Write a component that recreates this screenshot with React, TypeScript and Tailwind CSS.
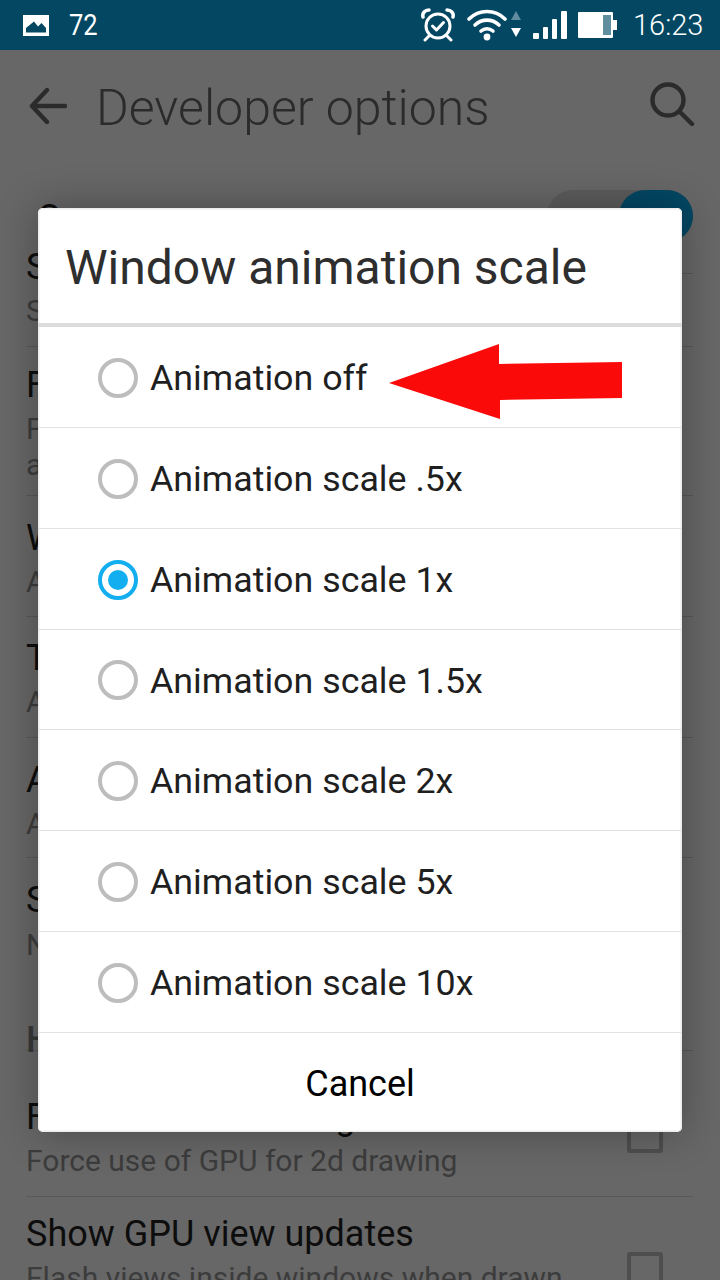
const sans = 'font-["Roboto",sans-serif]';

const scales = [
  'Animation off',
  'Animation scale .5x',
  'Animation scale 1x',
  'Animation scale 1.5x',
  'Animation scale 2x',
  'Animation scale 5x',
  'Animation scale 10x',
];

function StatusBar() {
  return (
    <div className="flex h-[50px] items-center bg-[#034763] text-white">
      <svg width="26" height="21" viewBox="0 0 26 21" className="ml-[23px]">
        <path fillRule="evenodd" fill="#fff" d="M0 0h26v21H0z M3 17.5h20V13l-4.5-5-3.5 3.5L11 6.5 3 13z" />
      </svg>
      <span className="ml-[20px] w-[31px] origin-left scale-x-[0.85] text-[30px] leading-none font-normal">72</span>
      <svg width="36" height="34" viewBox="0 0 36 34" className="ml-[321px]" fill="none" stroke="#fff" strokeWidth="3" strokeLinecap="round" strokeLinejoin="round">
        <circle cx="17" cy="18" r="12" />
        <path d="M11.5 18l4 4 7-7.5" />
        <path d="M2 9c-1-4 2-7 6-7M32 9c1-4-2-7-6-7" strokeWidth="3.5" />
        <path d="M8 28l-4 4M26 28l4 4" />
      </svg>
      <svg width="40" height="34" viewBox="0 0 40 34" className="ml-[10px]" fill="none" stroke="#fff" strokeWidth="3.6" strokeLinecap="round">
        <path d="M2 11c10-10 26-10 36 0" />
        <path d="M8 17c7-6.500 17-6.500 24 0" />
        <path d="M14 23c3.500-3 8.500-3 12 0" />
        <circle cx="20" cy="29" r="3.400" fill="#fff" stroke="none" />
      </svg>
      <svg width="12" height="28" viewBox="0 0 12 28" className="ml-[3px]">
        <path d="M6 0l5 9H1z" fill="#5f8c9f" />
        <path d="M1 17h10l-5 9z" fill="#fff" />
      </svg>
      <svg width="34" height="30" viewBox="0 0 34 30" className="ml-[11px]" fill="#fff">
        <rect x="0" y="23" width="6" height="6" rx="1" />
        <rect x="10" y="17" width="5" height="12" rx="1" />
        <rect x="19" y="9" width="5" height="20" rx="1" />
        <rect x="28" y="1" width="6" height="28" rx="1" />
      </svg>
      <svg width="40" height="26" viewBox="0 0 40 26" className="ml-[11px]">
        <rect x="0" y="0" width="35" height="26" rx="1" fill="#fff" />
        <rect x="25" y="3" width="8" height="20" fill="#5f8f9f" />
        <rect x="35" y="8" width="4" height="10" fill="#fff" />
      </svg>
      <span className="ml-[15px] text-[29px] leading-none font-light">16:23</span>
    </div>
  );
}

function Toolbar() {
  return (
    <div className="flex h-[112px] items-center text-[#2b2b2b]">
      <svg width="38" height="38" viewBox="0 0 38 38" className="ml-[29px]" fill="none" stroke="currentColor" strokeWidth="4.400" strokeLinecap="round" strokeLinejoin="round">
        <path d="M3 19h33M18 3L3 19l15 16" />
      </svg>
      <span className="mt-[4px] ml-[29px] text-[50px] leading-none font-light">Developer options</span>
      <svg width="48" height="48" viewBox="0 0 48 48" className="mr-[25px] mb-[4px] ml-auto" fill="none" stroke="currentColor" strokeWidth="4.400" strokeLinecap="round">
        <circle cx="21" cy="20" r="15.500" />
        <path d="M33 32l12 12" />
      </svg>
    </div>
  );
}

function Row({ title, lines, height, top, check }: { title: string; lines: string[]; height: string; top: string; check?: string }) {
  return (
    <div className={`relative border-b border-[#585858] ${height} ${top}`}>
      <div className="mb-[6px] text-[36px] leading-[40px] whitespace-nowrap text-[#0d0d0d]">{title}</div>
      {lines.map((line) => (
        <div key={line} className="text-[30px] leading-[36px] whitespace-nowrap text-[#3c3c3c]">
          {line}
        </div>
      ))}
      {check && <div className={`absolute right-[30px] h-[36px] w-[36px] rounded-[3px] border-4 border-[#4e4e4e] ${check}`} />}
    </div>
  );
}

function BackgroundList() {
  return (
    <div className="pr-[27px] pl-[26px]">
      <div className="relative h-[112px]">
        <span className="ml-[11px] block pt-[36px] text-[36px] leading-[40px] text-[#0d0d0d]">On</span>
        <div className="absolute top-[28px] right-0 flex h-[52px] w-[146px] justify-end rounded-full bg-[#5c5c5c]">
          <div className="h-[52px] w-[74px] rounded-full bg-[#034763]" />
        </div>
        <div className="absolute right-0 bottom-0 h-px w-[20px] bg-[#585858]" />
      </div>
      <div className="-mt-[27px]">
        <Row title="Show layout bounds" lines={['Show clip bounds, margins, etc.']} height="h-[100px]" top="pt-0" />
      </div>
      <Row title="Force RTL layout direction" lines={['Force screen layout direction to RTL for', 'all locales']} height="h-[149px]" top="pt-[18px]" />
      <Row title="Window animation scale" lines={['Animation scale 1x']} height="h-[121px]" top="pt-[22px]" />
      <Row title="Transition animation scale" lines={['Animation scale 1x']} height="h-[121px]" top="pt-[21px]" />
      <Row title="Animator duration scale" lines={['Animation scale 1x']} height="h-[120px]" top="pt-[22px]" />
      <div className="h-[193px] border-b border-[#585858] pt-[22px]">
        <div className="mb-[7px] text-[36px] leading-[40px] whitespace-nowrap text-[#0d0d0d]">Simulate secondary displays</div>
        <div className="text-[30px] leading-[36px] text-[#3c3c3c]">None</div>
        <div className="mt-[57px] text-[36px] leading-[40px] font-medium whitespace-nowrap text-[#383838]">Hardware accelerated rendering</div>
      </div>
      <Row title="Force GPU rendering" lines={['Force use of GPU for 2d drawing']} height="h-[146px]" top="pt-[46px]" check="top-[66px]" />
      <Row title="Show GPU view updates" lines={['Flash views inside windows when drawn']} height="h-[146px]" top="pt-[17px]" check="top-[55px]" />
    </div>
  );
}

function Radio({ checked }: { checked: boolean }) {
  return (
    <span className={`flex h-[40px] w-[40px] items-center justify-center rounded-full border-4 ${checked ? 'border-[#13aeef]' : 'border-[#bdbdbd]'}`}>
      {checked && <span className="h-[20px] w-[20px] rounded-full bg-[#13aeef]" />}
    </span>
  );
}

function ScaleDialog() {
  return (
    <div className="absolute top-[208px] left-[38px] w-[644px] overflow-hidden rounded-[5px] bg-white shadow-[0_0_40px_rgba(0,0,0,0.3),inset_0_0_0_1.5px_#ececec]">
      <div className="flex h-[119px] items-center border-b-4 border-[#dcdcdc] pt-[4px] pl-[27px] text-[48px] leading-none text-[#2e2e2e]">Window animation scale</div>
      {scales.map((label) => (
        <div key={label} className="flex h-[100.85px] items-center border-b-[1.5px] border-[#e2e2e2] pt-[2px] pl-[60px] text-[#1f1f1f]">
          <Radio checked={label === 'Animation scale 1x'} />
          <span className="mt-[2px] ml-[12px] text-[35.8px] leading-none">{label}</span>
        </div>
      ))}
      <div className="flex h-[99px] items-center justify-center pt-[4px] text-[36px] leading-none text-black">Cancel</div>
    </div>
  );
}

export default function App() {
  return (
    <div className={`relative h-[1280px] w-[720px] overflow-hidden bg-[#676767] ${sans}`}>
      <StatusBar />
      <Toolbar />
      <BackgroundList />
      <ScaleDialog />
      <svg width="240" height="80" viewBox="0 0 240 80" className="absolute top-[342px] left-[386px]">
        <path d="M3 41L113 2v20l123-2v36l-122 2v19z" fill="#fb0a0a" />
      </svg>
    </div>
  );
}
